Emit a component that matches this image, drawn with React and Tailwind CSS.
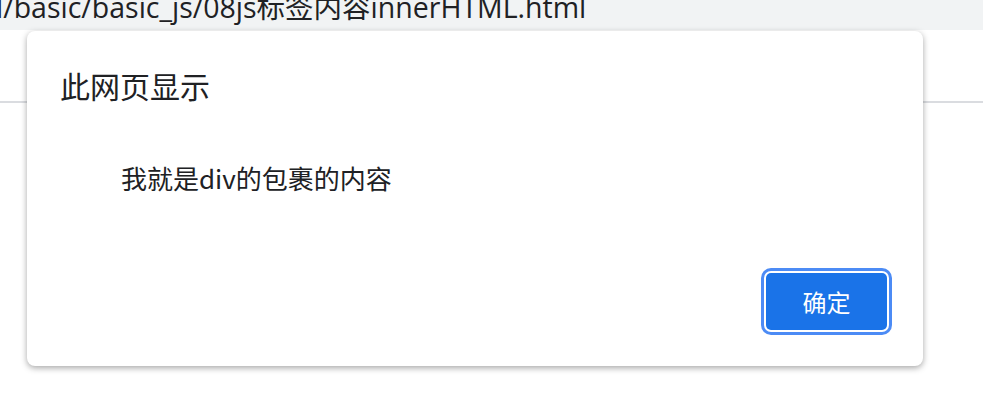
import React from 'react';

export default function App() {
  return (
    <div className="relative w-[983px] h-[413px] overflow-hidden bg-white font-['Noto_Sans_CJK_SC',sans-serif] text-[#202124]">
      {/* browser chrome behind the alert */}
      <div className="h-[30px] bg-[#f1f3f4] overflow-hidden">
        <div className="-mt-[8px] -ml-[4px] whitespace-nowrap text-[28.5px] leading-[30px] text-[#202124] font-['Open_Sans','Noto_Sans_CJK_SC',sans-serif]">
          l/basic/basic_js/08js标签内容innerHTML.html
        </div>
      </div>
      <div className="h-[73px] border-b-2 border-[#dadce0]"></div>

      {/* alert dialog */}
      <div className="absolute left-[27px] top-[31px] w-[896px] h-[335px] rounded-lg bg-white shadow-[0_2px_6px_rgba(0,0,0,0.35)] flex flex-col">
        <div className="pl-[33px] pt-[36px] text-[30px] leading-[36px]">此网页显示</div>
        <div className="pl-[94px] pt-[60px] text-[26px] leading-[30px]">我就是div的包裹的内容</div>
        <div className="mt-auto flex justify-end pr-[36px] pb-[36px]">
          <button className="w-[121px] h-[57px] rounded-[5px] bg-[#1a73e8] text-white text-[24px] ring-[3px] ring-[#4c8bf5] ring-offset-2 ring-offset-white">
            确定
          </button>
        </div>
      </div>
    </div>
  );
}
